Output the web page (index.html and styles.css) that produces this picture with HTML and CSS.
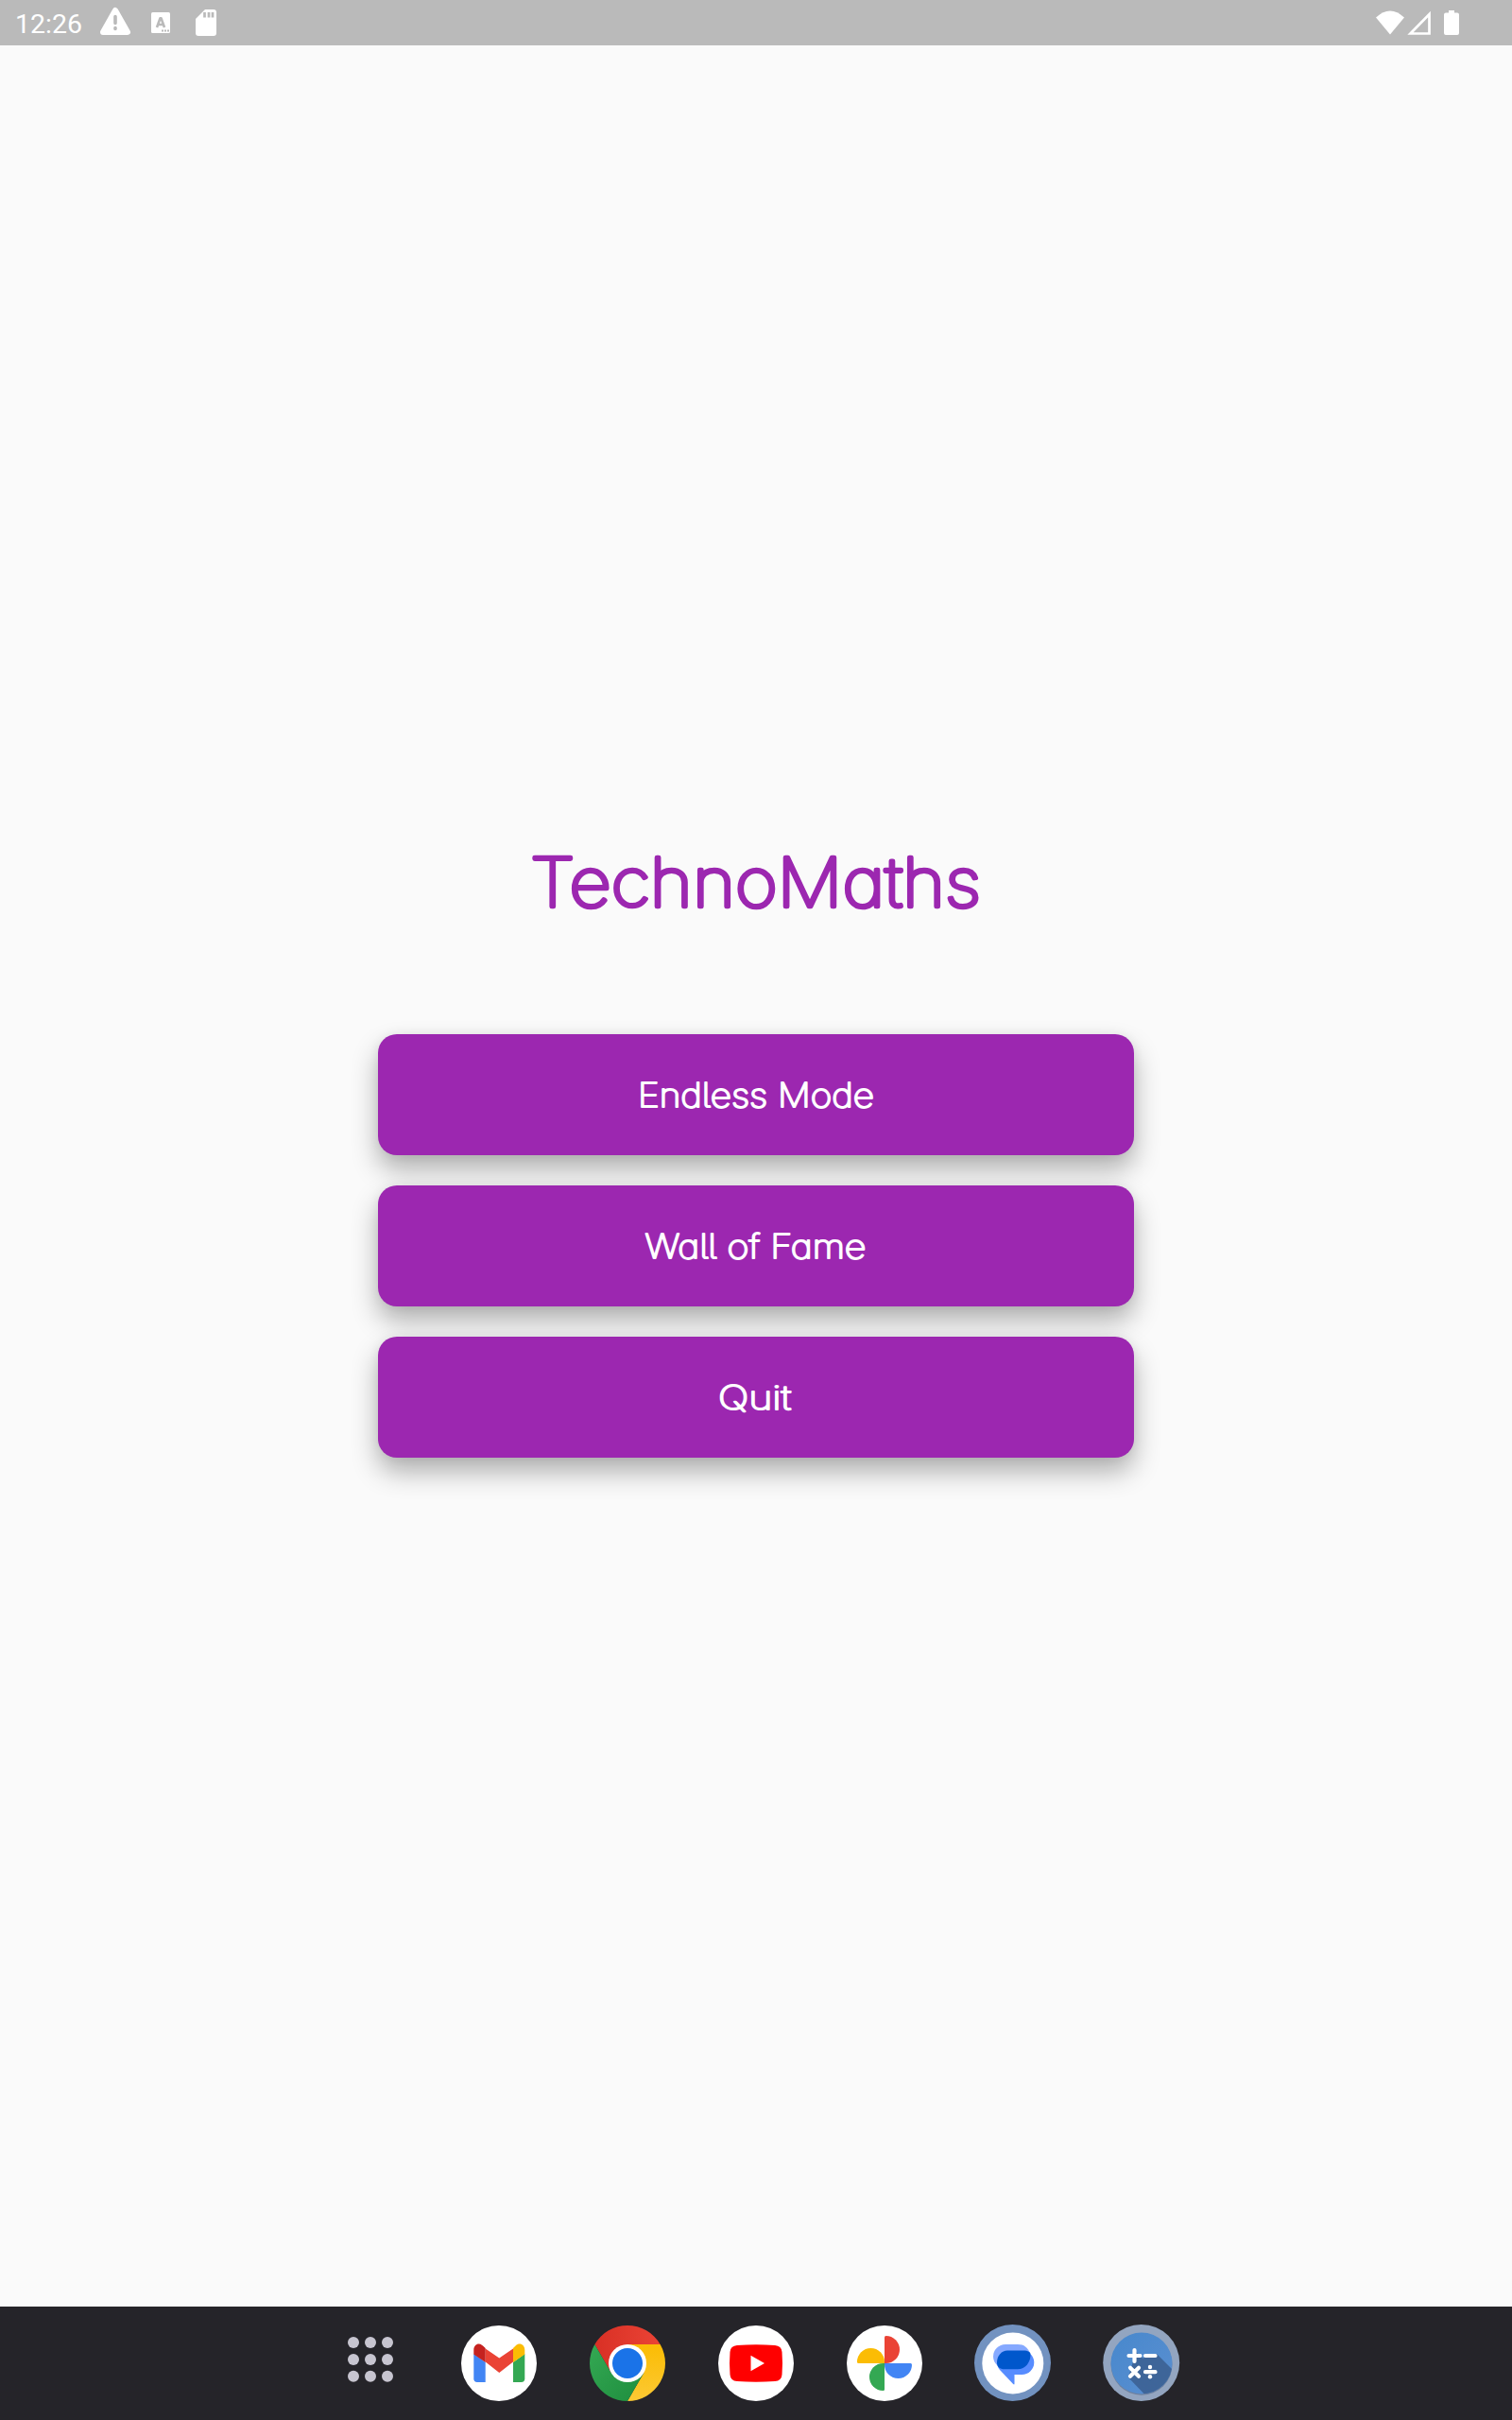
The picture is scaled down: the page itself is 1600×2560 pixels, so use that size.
FILE: index.html
```html
<!DOCTYPE html>
<html lang="en">
<head>
<meta charset="utf-8">
<title>TechnoMaths</title>
<link rel="stylesheet" href="styles.css">
</head>
<body>
<div class="screen">
  <header class="status">
    <span class="clock">12:26</span>
    <svg class="left-icons" width="140" height="48" viewBox="100 0 140 48">
      <path d="M122 11 135 34H109Z" fill="#fff" stroke="#fff" stroke-width="6" stroke-linejoin="round"/>
      <path d="M122 17.500v7M122 29.500v1" stroke="#bababa" stroke-width="3.600" stroke-linecap="round"/>
      <rect x="160" y="13" width="20" height="22" rx="1.500" fill="#fff"/>
      <path d="M166 29 169.500 19.200H170.500L174 29M167.500 26h5" fill="none" stroke="#bababa" stroke-width="2.600" stroke-linejoin="round"/>
      <path d="M171 32.500h2M174 32.500h2M177 32.500h2" stroke="#bababa" stroke-width="2"/>
      <path d="M217 10h9a3 3 0 0 1 3 3v22a3 3 0 0 1-3 3h-16a3 3 0 0 1-3-3V20Z" fill="#fff"/>
      <path d="M216.500 13v5.500M221 13v5.500M225 13v5.500" stroke="#bababa" stroke-width="2.700"/>
    </svg>
    <svg class="right-icons" width="100" height="48" viewBox="1450 0 100 48">
      <path d="M1471 36.500 1456 18.500Q1471 4.500 1486 18.500Z" fill="#fff"/>
      <path d="M1492.500 35.500H1512.500V15Z" fill="none" stroke="#fff" stroke-width="2.700"/>
      <path d="M1533 11h6v2.500h3a2 2 0 0 1 2 2V35a2 2 0 0 1-2 2h-12a2 2 0 0 1-2-2V15.500a2 2 0 0 1 2-2h3Z" fill="#fff"/>
    </svg>
  </header>
  <main class="menu">
    <svg class="title" width="520" height="110" viewBox="540 880 520 110"><text x="561" y="959" textLength="477" lengthAdjust="spacingAndGlyphs">TechnoMaths</text></svg>
    <nav class="buttons">
      <button class="button"><svg width="280" height="60" viewBox="660 1128 280 60"><text x="675" y="1171" textLength="250" lengthAdjust="spacingAndGlyphs">Endless Mode</text></svg></button>
      <button class="button"><svg width="280" height="60" viewBox="660 1288 280 60"><text x="682.500" y="1331" textLength="234" lengthAdjust="spacingAndGlyphs">Wall of Fame</text></svg></button>
      <button class="button"><svg width="280" height="60" viewBox="660 1448 280 60"><text x="760" y="1491" textLength="77" lengthAdjust="spacingAndGlyphs">Quit</text></svg></button>
    </nav>
  </main>
  <footer class="dock">
    <svg width="48" height="48" viewBox="368 2472 48 48" class="apps" fill="#c7c5d0">
      <circle cx="374" cy="2478" r="6"/><circle cx="392" cy="2478" r="6"/><circle cx="410" cy="2478" r="6"/>
      <circle cx="374" cy="2496" r="6"/><circle cx="392" cy="2496" r="6"/><circle cx="410" cy="2496" r="6"/>
      <circle cx="374" cy="2513.700" r="6"/><circle cx="392" cy="2513.700" r="6"/><circle cx="410" cy="2513.700" r="6"/>
    </svg>
    <svg class="app" viewBox="-42 -42 84 84">
      <circle r="40" fill="#fff"/>
      <path d="M-26.700-10 -14.300-1V20H-23a3.700 3.700 0 0 1-3.700-3.700Z" fill="#4285f4"/>
      <path d="M27.300-10 15-1V20h8.600a3.700 3.700 0 0 0 3.700-3.700Z" fill="#34a853"/>
      <path d="M-14.300-15.500.3-5.500 15-15.500V-1.500L.3 10-14.300-1.500Z" fill="#ea4335"/>
      <path d="M-26.700-9.500V-14C-26.700-20-21-22.500-17-18.500L-14.300-16V-1Z" fill="#c5221f"/>
      <path d="M27.300-9.500V-14C27.300-20 21.600-22.500 17.600-18.500L15-16V-1Z" fill="#fbbc04"/>
    </svg>
    <svg class="app" viewBox="-42 -42 84 84">
      <defs>
        <linearGradient id="red"><stop stop-color="#d93025"/><stop offset="1" stop-color="#ea4335"/></linearGradient>
        <linearGradient id="green" x1="1" y1="1" x2="0" y2="0"><stop stop-color="#1e8e3e"/><stop offset="1" stop-color="#34a853"/></linearGradient>
        <linearGradient id="yellow" x1="0" y1="1" x2="0" y2="0"><stop stop-color="#fcc934"/><stop offset="1" stop-color="#fbbc04"/></linearGradient>
      </defs>
      <path d="M-34.640-20A40 40 0 0 1 34.640-20H0L-17.300 10Z" fill="url(#red)"/>
      <path d="M34.640-20A40 40 0 0 1 0 40L17.300 10 0-20Z" fill="url(#yellow)"/>
      <path d="M0 40A40 40 0 0 1-34.640-20L-17.300 10 17.300 10Z" fill="url(#green)"/>
      <circle r="20" fill="#fff"/><circle r="16" fill="#1a73e8"/>
    </svg>
    <svg class="app" viewBox="-42 -42 84 84">
      <circle r="40" fill="#fff"/>
      <path d="M-20-19Q0-20.500 20-19Q27-18.500 27.500-12Q28.500 0 27.500 12Q27 18.500 20 19Q0 20.500-20 19Q-27 18.500-27.500 12Q-28.500 0-27.500-12Q-27-18.500-20-19Z" fill="#f00"/>
      <path d="M-5.500-8.300 9 0-5.500 8.300Z" fill="#fff"/>
    </svg>
    <svg class="app" viewBox="-42 -42 84 84">
      <circle r="40" fill="#fff"/>
      <path d="M0 0V-27.500Q0-29 1.500-29A14.500 14.500 0 0 1 1.500 0Z" fill="#ea4335"/>
      <path d="M0 0H27.500Q29 0 29 1.500A14.500 14.500 0 0 1 0 1.500Z" fill="#4285f4"/>
      <path d="M0 0V27.500Q0 29-1.500 29A14.500 14.500 0 0 1-1.500 0Z" fill="#34a853"/>
      <path d="M0 0H-27.500Q-29 0-29-1.500A14.500 14.500 0 0 1 0-1.500Z" fill="#fbbc04"/>
    </svg>
    <svg class="app" viewBox="-42 -42 84 84">
      <circle cx="-.5" cy="-.5" r="40.500" fill="#7292c0"/><circle cx="-.2" cy="0" r="32.500" fill="#fff"/>
      <path d="M-8-20H5C12-20 15-17 18.500-10L-16 3C-19 0-21-3-21-7A13 13 0 0 1-8-20Z" fill="#86a9ff"/>
      <path d="M18-10C21-8 22.300-4 22.300-1A13 13 0 0 1 9.300 12H1.500V21.500Q1.500 23 .2 22L-14 7Q-17 4-17-2Z" fill="#578cff"/>
      <path d="M-6-13.500H11C16-13.500 18.500-12 18.500-9C18.500-1 13 6.300 5 6.300H-9C-14 6.300-17 4-17-1C-17-8-12-13.500-6-13.500Z" fill="#0057cc"/>
    </svg>
    <svg class="app" viewBox="-42 -42 84 84">
      <defs>
        <linearGradient id="calc" x1="0" x2="1" y2="1"><stop stop-color="#4788cd"/><stop offset="1" stop-color="#5b8fd0"/></linearGradient>
        <clipPath id="disc"><circle r="32.500"/></clipPath>
      </defs>
      <circle cx="-.3" cy="-.5" r="40.500" fill="#93a5c0"/>
      <circle cy="1.200" r="32.500" fill="#6f819d"/>
      <circle r="32.500" fill="url(#calc)"/>
      <path clip-path="url(#disc)" d="M-6-12 2-5 4-10 16-10 42 16V42H12L-14 15Z" fill="#3e6599"/>
      <path d="M-13.500-8H-1.500M-7.500-14V-2M4-8H14.500M4 9.200H14.500M-12 4.700-3 13.700M-3 4.700-12 13.700" stroke="#fff" stroke-width="4.200" stroke-linecap="round"/>
      <circle cx="9" cy="4" r="2.200" fill="#fff"/><circle cx="9" cy="14.200" r="2.200" fill="#fff"/>
    </svg>
  </footer>
</div>
</body>
</html>
```
FILE: styles.css
```css
body { margin: 0; background: #fafafa; font-family: Roboto, sans-serif; }
.screen { width: 1600px; height: 2560px; display: flex; flex-direction: column; }
.status { height: 48px; box-sizing: border-box; padding: 0 50px 0 16px; display: flex; align-items: center; background: #bababa; }
.clock { width: 84px; color: #fff; font-size: 28.5px; line-height: 48px; padding-top: 3px; }
.right-icons { margin-left: auto; }
.menu { flex: 1; display: flex; flex-direction: column; align-items: center; padding-top: 832px; }
.title, .button svg { display: block; font-family: Inter, Lato, sans-serif; font-weight: 100; font-feature-settings: "cv11"; stroke-linejoin: round; overflow: visible; }
.title { font-size: 71px; fill: #9c27b0; stroke: #9c27b0; stroke-width: 4.6px; margin-bottom: 104px; }
.buttons { display: flex; flex-direction: column; gap: 32px; width: 800px; }
.button { height: 128px; padding: 0; border: 0; border-radius: 20px; background: #9c27b0; display: flex; align-items: center; justify-content: center; box-shadow: 0 15px 28px rgba(0,0,0,.3), 0 0 12px rgba(0,0,0,.06); }
.button svg { font-size: 35px; font-feature-settings: "cv11", "cv05"; fill: #fff; stroke: #fff; stroke-width: 2.2px; }
.dock { height: 120px; box-sizing: border-box; padding: 18px 0 0 368px; display: flex; align-items: flex-start; background: #252429; }
.apps { margin: 14px 70px 0 0; }
.app { width: 84px; height: 84px; margin-right: 52px; }
```
